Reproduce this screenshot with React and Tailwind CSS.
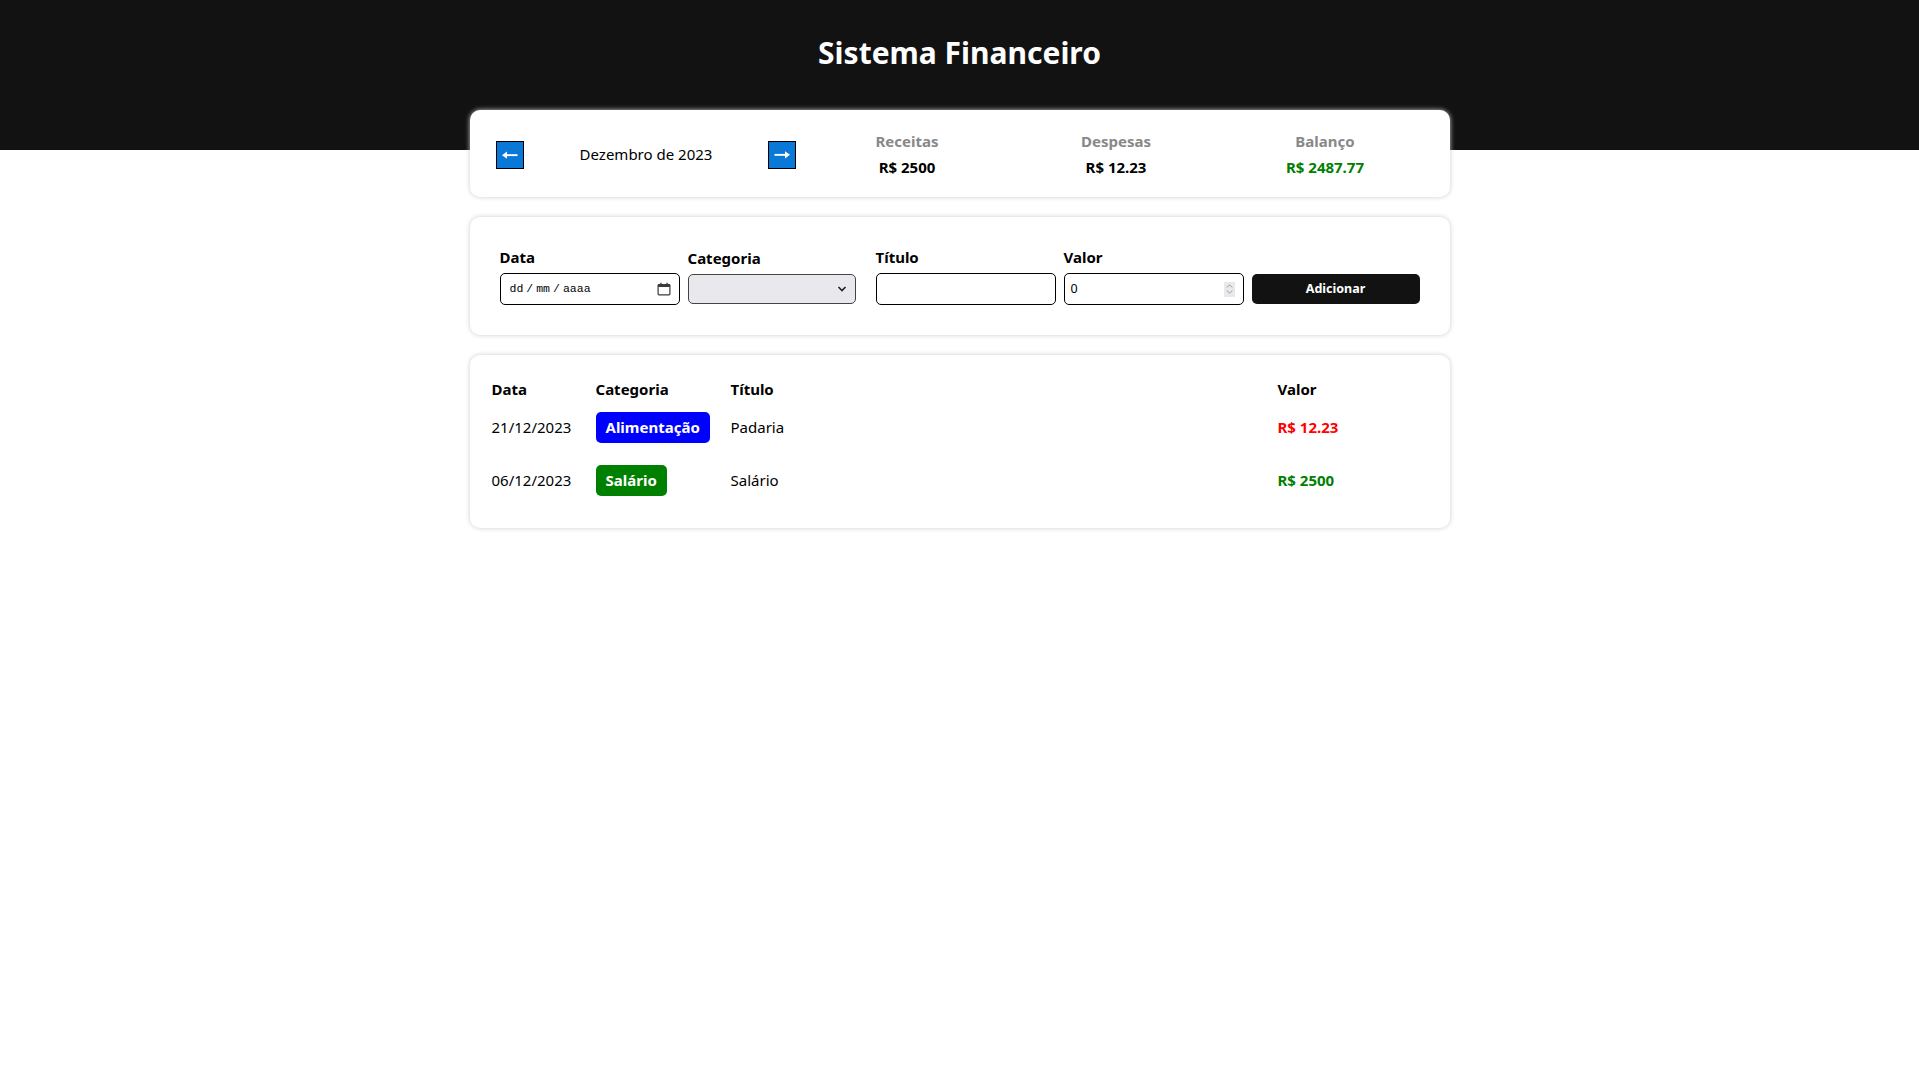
function ArrowBtn({ dir }) {
  return (
    <button className="flex h-[28px] w-[28px] shrink-0 items-center justify-center border border-black bg-[#0a78d7] p-0">
      <svg width="26" height="26" viewBox="0 0 26 26" className={dir === "right" ? "rotate-180" : ""}>
        <rect x="8.5" y="12.2" width="12" height="1.9" fill="#fff" />
        <polygon points="5,13.15 10,9.6 10,16.7" fill="#fff" />
      </svg>
    </button>
  );
}

function Info({ label, value, color }) {
  return (
    <div className="flex-1 text-center">
      <div className="mb-[5px] text-[15px] font-bold leading-[21px] text-[#888888]">{label}</div>
      <div className={`text-[15px] font-bold leading-[21px] ${color}`}>{value}</div>
    </div>
  );
}

function Title({ children }) {
  return <div className="mb-[5px] h-[21px] text-[15px] font-bold leading-[21px]">{children}</div>;
}

export default function App() {
  return (
    <div className="min-h-screen bg-white font-['Noto_Sans',sans-serif] text-black">
      <header className="h-[150px] bg-[#121212] pt-[31px] text-center">
        <h1 className="m-0 text-[30px] font-bold leading-[43px] text-white">Sistema Financeiro</h1>
      </header>
      <main className="mx-auto -mt-[40px] max-w-[980px]">
        <section className="flex items-center rounded-[10px] bg-white px-[20px] pt-[21px] pb-[19px] shadow-[0_0_5px_#cccccc]">
          <div className="flex w-[313px] shrink-0 items-center justify-between px-[6px]">
            <ArrowBtn dir="left" />
            <div className="text-[15px] leading-[21px]">Dezembro de 2023</div>
            <ArrowBtn dir="right" />
          </div>
          <div className="flex min-w-0 flex-1">
            <Info label="Receitas" value="R$ 2500" color="text-black" />
            <Info label="Despesas" value="R$ 12.23" color="text-black" />
            <Info label="Balanço" value="R$ 2487.77" color="text-[#008000]" />
          </div>
        </section>

        <section className="mt-[20px] flex items-center rounded-[10px] bg-white p-[20px] shadow-[0_0_5px_#cccccc]">
          <label className="m-[10px] block min-w-0 flex-1">
            <Title>Data</Title>
            <div className="flex h-[32px] w-[180px] items-center justify-between rounded-[5px] border border-black pl-[9px] pr-[8px]">
              <span className="flex gap-[3px] font-['Liberation_Mono',monospace] text-[11.5px] leading-[16px] text-black">
                <span>dd</span><span>/</span><span>mm</span><span>/</span><span>aaaa</span>
              </span>
              <svg width="14" height="14" viewBox="0 0 14 14">
                <rect x="1.1" y="2.6" width="11.8" height="10.3" rx="0.8" fill="none" stroke="#3b3b3b" strokeWidth="1.2" />
                <rect x="1.1" y="2.6" width="11.8" height="2.4" fill="#3b3b3b" />
                <rect x="3.2" y="0.8" width="1.4" height="2.6" fill="#3b3b3b" />
                <rect x="9.4" y="0.8" width="1.4" height="2.6" fill="#3b3b3b" />
              </svg>
            </div>
          </label>
          <label className="m-[10px] block min-w-0 flex-1">
            <Title>Categoria</Title>
            <div className="relative h-[30px] w-full">
              <select className="h-[30px] w-full appearance-none rounded-[5px] border border-[#444] bg-[#e9e9ed] px-[5px] text-[13px]">
                <option></option>
              </select>
              <svg width="10" height="8" viewBox="0 0 10 8" className="pointer-events-none absolute right-[9px] top-[11px]">
                <polyline points="1.5,2 5,5.5 8.5,2" fill="none" stroke="#222" strokeWidth="1.6" />
              </svg>
            </div>
          </label>
          <label className="m-[10px] block min-w-0 flex-1">
            <Title>Título</Title>
            <input type="text" className="h-[32px] w-[180px] rounded-[5px] border border-black px-[5px] text-[13px] outline-none" />
          </label>
          <label className="m-[10px] block min-w-0 flex-1">
            <Title>Valor</Title>
            <div className="flex h-[32px] w-[180px] items-center justify-between rounded-[5px] border border-black pl-[6px] pr-[8px]">
              <span className="text-[12.5px] leading-[16px]">0</span>
              <div className="flex h-[15px] w-[11px] flex-col items-center justify-center gap-[2px] bg-[#e9e9ed]">
                <svg width="7" height="4" viewBox="0 0 7 4"><polyline points="0.8,3.5 3.5,0.8 6.2,3.5" fill="none" stroke="#9a9a9a" strokeWidth="1" /></svg>
                <svg width="7" height="4" viewBox="0 0 7 4"><polyline points="0.8,0.5 3.5,3.2 6.2,0.5" fill="none" stroke="#9a9a9a" strokeWidth="1" /></svg>
              </div>
            </div>
          </label>
          <label className="m-[10px] block min-w-0 flex-1">
            <Title></Title>
            <button className="h-[30px] w-full rounded-[5px] bg-[#121212] px-[5px] text-[12.5px] font-bold text-white">Adicionar</button>
          </label>
        </section>

        <section className="mt-[20px] rounded-[10px] bg-white p-[20px] shadow-[0_0_5px_#cccccc]">
          <table className="w-full table-fixed border-separate border-spacing-[2px] text-[15px]">
            <thead>
              <tr>
                <th className="w-[102px] pt-[2px] text-left font-bold leading-[21px]">Data</th>
                <th className="w-[133px] pt-[2px] text-left font-bold leading-[21px]">Categoria</th>
                <th className="pt-[2px] text-left font-bold leading-[21px]">Título</th>
                <th className="w-[150px] pt-[2px] text-left font-bold leading-[21px]">Valor</th>
              </tr>
            </thead>
            <tbody>
              <tr>
                <td className="py-[10px] leading-[21px]">21/12/2023</td>
                <td className="py-[10px]">
                  <div className="flex w-fit rounded-[5px] bg-[#0000ff] px-[10px] py-[5px] font-bold leading-[21px] text-white">Alimentação</div>
                </td>
                <td className="py-[10px] leading-[21px]">Padaria</td>
                <td className="py-[10px] font-bold leading-[21px] text-[#ff0000]">R$ 12.23</td>
              </tr>
              <tr>
                <td className="py-[10px] leading-[21px]">06/12/2023</td>
                <td className="py-[10px]">
                  <div className="flex w-fit rounded-[5px] bg-[#008000] px-[10px] py-[5px] font-bold leading-[21px] text-white">Salário</div>
                </td>
                <td className="py-[10px] leading-[21px]">Salário</td>
                <td className="py-[10px] font-bold leading-[21px] text-[#008000]">R$ 2500</td>
              </tr>
            </tbody>
          </table>
        </section>
      </main>
    </div>
  );
}
